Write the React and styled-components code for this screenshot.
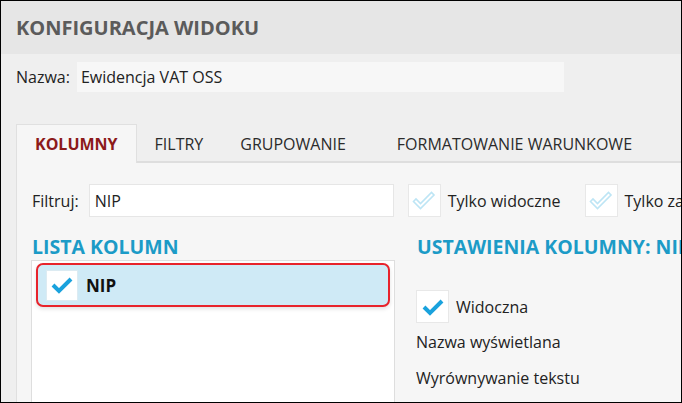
import styled, { createGlobalStyle } from 'styled-components'

const GlobalStyle = createGlobalStyle`
  body {
    margin: 0;
    font-family: "Open Sans", "Noto Sans", sans-serif;
    color: #222;
  }
`

const Frame = styled.div`
  width: 682px;
  height: 403px;
  box-sizing: border-box;
  border: 1px solid #000;
  background: #efefef;
  overflow: hidden;
  display: flex;
  flex-direction: column;
`

const Header = styled.div`
  height: 53px;
  flex-shrink: 0;
  background: #e6e6e6;
  padding: 0 15px;
  display: flex;
  align-items: center;
`

const Title = styled.h1`
  margin: 0;
  font-size: 20px;
  font-weight: 700;
  color: #5b5b5b;
`

const NameRow = styled.div`
  display: flex;
  align-items: center;
  gap: 7px;
  padding: 8px 15px 0;
  font-size: 16px;
`

const NameInput = styled.div`
  width: 487px;
  height: 30px;
  box-sizing: border-box;
  background: #f7f7f7;
  padding-left: 4px;
  display: flex;
  align-items: center;
`

const TabBar = styled.div`
  margin: 32px 0 0 15px;
  display: flex;
  border-bottom: 2px solid #dedede;
  flex-shrink: 0;
`

const Tab = styled.div`
  height: 39px;
  box-sizing: border-box;
  padding: 0 ${(p) => p.$pr ?? 19}px 0 ${(p) => p.$pl ?? 19}px;
  display: flex;
  align-items: center;
  font-size: 16px;
  color: #2b2b2b;
  white-space: nowrap;
  margin-bottom: -2px;
  border: 1px solid transparent;
  border-bottom: none;

  &.active {
    background: #f6f6f6;
    border-color: #e0e0e0;
    color: #8c1a1a;
    font-weight: 700;
  }
`

const Panel = styled.div`
  flex: 1;
  min-height: 0;
  margin-left: 15px;
  background: #f6f6f6;
  border-left: 1px solid #e0e0e0;
  padding: 21px 0 0 14px;
  display: flex;
  flex-direction: column;
`

const FilterRow = styled.div`
  display: flex;
  align-items: center;
  font-size: 16px;
  white-space: nowrap;

  & > * {
    flex-shrink: 0;
  }
`

const FilterLabel = styled.span`
  margin-left: 1px;
  margin-right: 10px;
`

const FilterInput = styled.div`
  width: 305px;
  height: 33px;
  box-sizing: border-box;
  background: #fff;
  border: 1px solid #e6e6e6;
  padding-left: 5px;
  display: flex;
  align-items: center;
`

const Option = styled.label`
  display: flex;
  align-items: center;
  gap: 7px;
  margin-left: ${(p) => p.$offset || 0}px;
  font-size: 16px;
  white-space: nowrap;
`

const Box = styled.span`
  width: 33px;
  height: 33px;
  box-sizing: border-box;
  background: #fff;
  border: 1px solid #e8e8e8;
  display: flex;
  align-items: center;
  justify-content: center;
  flex-shrink: 0;
`

const Columns = styled.div`
  flex: 1;
  min-height: 0;
  display: grid;
  grid-template-columns: 364px 1fr;
  column-gap: 21px;
  margin-top: 16px;
`

const Column = styled.div`
  display: flex;
  flex-direction: column;
  min-width: 0;
`

const SectionTitle = styled.h2`
  margin: 0 0 0 1px;
  font-size: 19.5px;
  font-weight: 700;
  color: #1c9bc7;
  white-space: nowrap;
  line-height: 27px;
`

const ListBox = styled.div`
  flex: 1;
  background: #fff;
  border: 1px solid #dedede;
  border-bottom: none;
  padding: 2px 4px;
`

const ListRow = styled.div`
  height: 44px;
  box-sizing: border-box;
  border: 2px solid #e8232b;
  border-radius: 7px;
  background: #cfeaf6;
  box-shadow: 0 2px 4px rgba(0, 0, 0, 0.12);
  display: flex;
  align-items: center;
  padding-left: 8px;
  gap: 8px;
  font-size: 17px;
  font-weight: 700;
  color: #111;

  ${Box} {
    width: 32px;
    height: 31px;
    border-color: #dcebf2;
  }
`

const SettingsOption = styled(Option)`
  margin-top: 30px;
`

const SettingLine = styled.div`
  font-size: 16px;
  margin-top: ${(p) => p.$gap}px;
  white-space: nowrap;
`

const CheckOn = () => (
  <svg width="22" height="18" viewBox="0 0 22 18">
    <path d="M2 9 L8 15 L20 3" fill="none" stroke="#1aa2dd" strokeWidth="4" />
  </svg>
)

const CheckOff = () => (
  <svg width="24" height="20" viewBox="0 0 24 20">
    <path
      d="M1.5 10.5 L4 8 L8.5 12.5 L19.5 1.5 L22 4 L8.5 17.5 Z"
      fill="none"
      stroke="#bde5f5"
      strokeWidth="1.6"
      strokeLinejoin="miter"
    />
  </svg>
)

export default function App() {
  return (
    <>
      <GlobalStyle />
      <Frame>
        <Header>
          <Title>KONFIGURACJA WIDOKU</Title>
        </Header>
        <NameRow>
          <span>Nazwa:</span>
          <NameInput>Ewidencja VAT OSS</NameInput>
        </NameRow>
        <TabBar>
          <Tab className="active" $pl={18} $pr={18}>KOLUMNY</Tab>
          <Tab $pl={17}>FILTRY</Tab>
          <Tab $pl={16} $pr={22}>GRUPOWANIE</Tab>
          <Tab $pl={27}>FORMATOWANIE WARUNKOWE</Tab>
        </TabBar>
        <Panel>
          <FilterRow>
            <FilterLabel>Filtruj:</FilterLabel>
            <FilterInput>NIP</FilterInput>
            <Option $offset={14}>
              <Box><CheckOff /></Box>
              Tylko widoczne
            </Option>
            <Option $offset={24}>
              <Box><CheckOff /></Box>
              Tylko zaznaczone
            </Option>
          </FilterRow>
          <Columns>
            <Column>
              <SectionTitle>LISTA KOLUMN</SectionTitle>
              <ListBox>
                <ListRow>
                  <Box><CheckOn /></Box>
                  NIP
                </ListRow>
              </ListBox>
            </Column>
            <Column>
              <SectionTitle>USTAWIENIA KOLUMNY: NIP</SectionTitle>
              <SettingsOption>
                <Box><CheckOn /></Box>
                Widoczna
              </SettingsOption>
              <SettingLine $gap={8}>Nazwa wyświetlana</SettingLine>
              <SettingLine $gap={14}>Wyrównywanie tekstu</SettingLine>
            </Column>
          </Columns>
        </Panel>
      </Frame>
    </>
  )
}
